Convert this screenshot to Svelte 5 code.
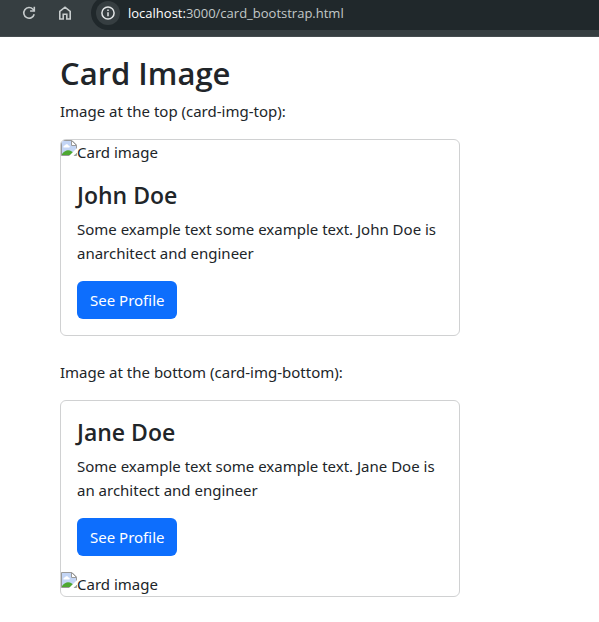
<script>
  const cards = [
    { caption: 'Image at the top (card-img-top):', name: 'John Doe', text: 'Some example text some example text. John Doe is anarchitect and engineer', bottom: false },
    { caption: 'Image at the bottom (card-img-bottom):', name: 'Jane Doe', text: 'Some example text some example text. Jane Doe is an architect and engineer', bottom: true }
  ];
</script>

{#snippet missing()}
  <div class="missing">
    <svg width="16" height="16" viewBox="0 0 16 16" aria-hidden="true">
      <path d="M0.5 0.5H11L15.5 5V15.5H0.5Z" fill="#c3d5f5" stroke="#9a9a9a" />
      <path d="M10.5 0.5V5.5H15.5Z" fill="#fff" stroke="#9a9a9a" />
      <path d="M2.5 7.5C2 5.8 3.3 5.2 4 5.5C4.5 3.8 7 3.8 7.4 5.5C8.8 5.3 9.2 7 8.3 7.5Z" fill="#fff" />
      <path d="M1 15V14C3 11.5 5 10.3 7 10.3C9.5 10.3 12 12 15 15Z" fill="#4ea832" />
      <path d="M8 16L16 8V12.5L12.5 16Z" fill="#fff" />
    </svg><span>Card image</span>
  </div>
{/snippet}

<div class="page">
  <header>
    <button aria-label="Reload">
      <svg width="16" height="16" viewBox="0 0 16 16" fill="none" stroke="#c7cccd" stroke-width="1.6">
        <path d="M13.2 9.2A5.3 5.3 0 1 1 12 4.3L13.3 5.6" />
        <path d="M13.3 1.8V6H9.1" />
      </svg>
    </button>
    <button aria-label="Home">
      <svg width="16" height="16" viewBox="0 0 16 16" fill="none" stroke="#c7cccd" stroke-width="1.6">
        <path d="M2.8 6.3L8 2.2L13.2 6.3V14H9.8V9.3H6.2V14H2.8Z" />
      </svg>
    </button>
    <div class="address">
      <button class="info" aria-label="Site information">
        <svg width="16" height="16" viewBox="0 0 16 16" fill="none" stroke="#e2e5e6" stroke-width="1.5">
          <circle cx="8" cy="8" r="6.1" />
          <path d="M8 7.3V11.3M8 4.6V6.1" />
        </svg>
      </button>
      <span class="url"><b>localhost:</b>3000/card_bootstrap.html</span>
    </div>
  </header>

  <main>
    <h2>Card Image</h2>
    {#each cards as card}
      <p class="caption">{card.caption}</p>
      <article>
        {#if !card.bottom}{@render missing()}{/if}
        <div class="body">
          <h4>{card.name}</h4>
          <p>{card.text}</p>
          <a href="#profile">See Profile</a>
        </div>
        {#if card.bottom}{@render missing()}{/if}
      </article>
    {/each}
  </main>
</div>

<style>
  :global(body) {
    margin: 0;
    background: #fff;
  }
  .page {
    font: 15px/24px "Noto Sans", "Open Sans", sans-serif;
    color: #212529;
  }
  header {
    box-sizing: border-box;
    height: 37px;
    display: flex;
    align-items: flex-start;
    background: #363e41;
    border-bottom: 1px solid #454c4f;
    padding-left: 15px;
    overflow: hidden;
  }
  button {
    width: 28px;
    height: 26px;
    margin-right: 8px;
    padding: 0;
    border: 0;
    background: none;
    display: flex;
    align-items: center;
    justify-content: center;
  }
  .address {
    flex: 1;
    height: 34px;
    margin-top: -4px;
    margin-left: 4px;
    display: flex;
    align-items: center;
    background: #20282b;
    border-radius: 17px 0 0 17px;
    padding-left: 5px;
    color: #c3c8c9;
    font-family: "Open Sans", "Noto Sans", sans-serif;
    font-size: 13px;
  }
  .info {
    width: 24px;
    height: 24px;
    border-radius: 50%;
    background: #363e41;
  }
  b {
    font-weight: 400;
    color: #fff;
  }
  main {
    padding: 17px 60px 16px;
  }
  h2, h4, p {
    margin: 0;
  }
  h2, h4 {
    font-family: "Open Sans", "Noto Sans", sans-serif;
    font-weight: 600;
    margin-bottom: 7px;
  }
  h2 {
    font-size: 31px;
    line-height: 38px;
  }
  h4 {
    font-size: 23px;
    line-height: 30px;
  }
  p {
    margin-bottom: 16px;
  }
  article {
    box-sizing: border-box;
    max-width: 400px;
    border: 1px solid #d0d1d2;
    border-radius: 6px;
    overflow: hidden;
    margin-bottom: 24px;
  }
  .body {
    padding: 16px;
  }
  .missing {
    display: flex;
    align-items: flex-start;
    height: 24px;
  }
  a {
    display: inline-block;
    vertical-align: top;
    padding: 7px 13px;
    border-radius: 6px;
    background: #0d6efd;
    color: #fff;
    text-decoration: none;
  }
</style>
